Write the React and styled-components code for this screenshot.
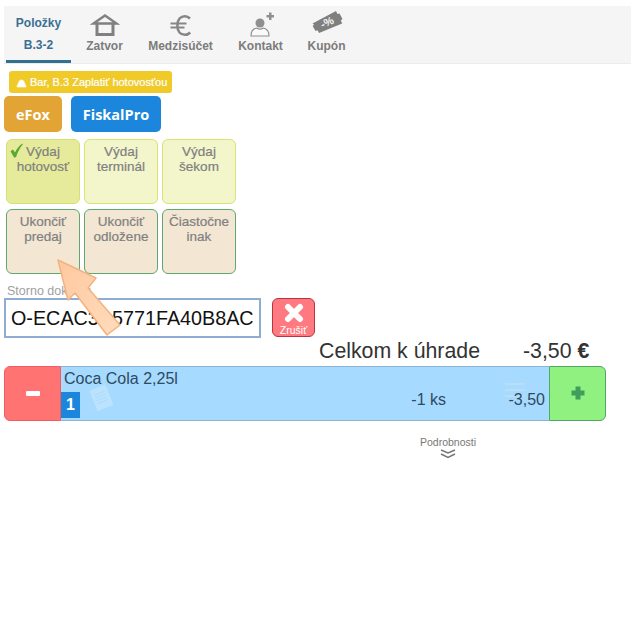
import React from "react";
import styled, { createGlobalStyle } from "styled-components";

const GlobalStyle = createGlobalStyle`
  html, body { margin: 0; padding: 0; background: #fff; }
  body { font-family: "Liberation Sans", Arial, sans-serif; }
`;

const HomeIcon = () => (
  <svg width="28" height="26" viewBox="0 0 28 26" fill="none" stroke="#808080">
    <path d="M2.500 12.500 14 4.500l11.500 8z" strokeWidth="2.400" strokeLinejoin="miter" />
    <path d="M6 12v11.500h16V12" strokeWidth="3" />
  </svg>
);

const EuroIcon = () => (
  <svg width="24" height="26" viewBox="0 0 24 26" fill="none" stroke="#878787">
    <path d="M21 7.500C19.500 6 17.800 5.200 16 5.200c-4.500 0-7.600 3.400-7.600 9.300s3.100 9.300 7.600 9.300c1.900 0 3.700-.8 5.200-2.300" strokeWidth="2.600" />
    <path d="M1.500 12.500h16M1.500 16.500h14" strokeWidth="1.800" />
  </svg>
);

const ContactIcon = () => (
  <svg width="26" height="26" viewBox="0 0 26 26">
    <circle cx="12" cy="12" r="4.500" fill="#8f8f8f" />
    <path d="M3 25c0-5 2.800-7.400 5.600-8 2 1.300 4.800 1.300 6.800 0 2.800.6 5.600 3 5.600 8z" fill="#fafafa" stroke="#8f8f8f" strokeWidth="1.100" />
    <path d="M18.500 4h2.500V1.500h2.500V4H26v2.500h-2.500V9H21V6.500h-2.500z" fill="#8f8f8f" />
  </svg>
);

const CouponIcon = () => (
  <svg width="32" height="26" viewBox="0 0 32 26">
    <path d="M1.500 12.500 25 0l1.500 3 2-.6L31.500 8l-1.700 1.500 1.400 3L8 22l-1.400-2.700-2 .8-3-5.200 1.500-1.200z" fill="#7f7f7f" />
    <text x="16" y="15" fontSize="11" fontWeight="700" fill="#f5f5f5" fontFamily="Liberation Sans" textAnchor="middle" transform="rotate(-24 16 11)">-%</text>
  </svg>
);

const CheckIcon = () => (
  <svg width="13" height="15" viewBox="0 0 13 15">
    <path d="M.5 8.200 3 6.600l2 3C6.500 6.400 8.900 3 12.200.6l.6.8C10 4.600 7.600 9 6 14.300L4 14.500z" fill="#5aa832" />
  </svg>
);

const BellIcon = () => (
  <svg width="11" height="11" viewBox="0 0 11 11">
    <path d="M1 10c0-2 1-2.500 1.500-4C3 4 3.600 3 5.500 3S8 4 8.500 6c.5 1.500 1.500 2 1.500 4z" fill="#fff" stroke="#fff" strokeWidth=".6" strokeLinejoin="round" />
  </svg>
);

const Page = styled.div`
  position: relative;
  width: 631px;
  height: 627px;
  overflow: hidden;
  padding: 6px 0 0 4px;
  box-sizing: border-box;
`;

const TabBar = styled.div`
  display: flex;
  height: 58px;
  background: #f5f5f5;
  border-bottom: 1px solid #ececec;
  box-sizing: border-box;
  padding-left: 2px;
`;

const ActiveTab = styled.div`
  width: 65px;
  height: 57px;
  box-sizing: border-box;
  border-bottom: 3px solid #31708f;
  color: #3b6f94;
  font-size: 12px;
  font-weight: 700;
  text-align: center;
  padding-top: 6px;
  line-height: 22px;
`;

const Tab = styled.div`
  width: ${(p) => p.$width}px;
  display: flex;
  flex-direction: column;
  align-items: center;
  justify-content: flex-start;
  padding-top: 5px;
  color: #7c7c7c;
  font-size: 12px;
  font-weight: 700;
  svg { display: block; height: 26px; margin-bottom: 2px; overflow: visible; }
`;

const Notice = styled.div`
  display: inline-flex;
  align-items: center;
  gap: 3px;
  height: 22px;
  margin: 7px 0 0 5px;
  padding: 0 5px 0 7px;
  background: #f0ca28;
  border-radius: 3px;
  color: #fff;
  font-size: 11px;
  -webkit-text-stroke: 0.2px #fff;
  white-space: nowrap;
`;

const NoticeRow = styled.div`
  display: flex;
`;

const BrandRow = styled.div`
  display: flex;
  gap: 9px;
  margin-top: 3px;
`;

const BrandButton = styled.div`
  display: flex;
  align-items: center;
  justify-content: center;
  width: ${(p) => p.$width}px;
  height: 36px;
  border-radius: 5px;
  background: ${(p) => p.$bg};
  color: #fff;
  font-family: "Open Sans", sans-serif;
  font-size: 14.500px;
  font-weight: 700;
`;

const ActionGrid = styled.div`
  display: grid;
  grid-template-columns: repeat(3, 74px);
  grid-auto-rows: 65px;
  column-gap: 4px;
  row-gap: 5px;
  margin: 7px 0 0 2px;
`;

const ActionButton = styled.div`
  box-sizing: border-box;
  border: 1px solid ${(p) => p.$border};
  border-radius: 6px;
  background: ${(p) => p.$bg};
  color: #808080;
  font-size: 13.500px;
  line-height: 15px;
  text-align: center;
  padding-top: 4px;
  -webkit-text-stroke: 0.2px #808080;
  svg { position: absolute; margin: -1px 0 0 -16px; }
`;

const StornoLabel = styled.div`
  margin: 10px 0 0 3px;
  height: 14px;
  font-size: 12.500px;
  line-height: 14px;
  color: #a0a0a0;
`;

const StornoRow = styled.div`
  display: flex;
  align-items: flex-start;
  gap: 11px;
`;

const StornoInput = styled.div`
  width: 257px;
  height: 40px;
  box-sizing: border-box;
  border: 2px solid #8fadd3;
  padding-left: 5px;
  font-size: 19.750px;
  line-height: 36px;
  color: #111;
  white-space: nowrap;
  overflow: hidden;
`;

const CancelButton = styled.div`
  width: 43px;
  height: 39px;
  box-sizing: border-box;
  border: 1px solid #b8353f;
  border-radius: 6px;
  background: #ff7a80;
  color: #fff;
  font-size: 10.500px;
  text-align: center;
  svg { display: block; margin: 4px auto 1px; }
`;

const TotalRow = styled.div`
  display: flex;
  height: 28px;
  color: #333;
  font-size: 21.300px;
  line-height: 26px;
  padding-left: 315px;
  white-space: nowrap;
`;

const TotalValue = styled.div`
  margin-left: 43px;
  b { font-weight: 700; }
`;

const ItemRow = styled.div`
  display: flex;
  width: 602px;
  height: 55px;
  box-sizing: border-box;
`;

const Minus = styled.div`
  width: 57px;
  box-sizing: border-box;
  display: flex;
  align-items: center;
  justify-content: center;
  background: #ff7373;
  border: 1px solid #f25c63;
  border-radius: 6px 0 0 6px;
  &::after {
    content: "";
    width: 14px;
    height: 5px;
    background: #fff;
    border-radius: 1px;
    margin-top: -1px;
  }
`;

const ItemBody = styled.div`
  position: relative;
  flex: 1;
  background: #a6daff;
  border-top: 1px solid #8cb4d4;
  border-bottom: 1px solid #8cb4d4;
  box-sizing: border-box;
  color: #2d4a62;
`;

const ItemName = styled.div`
  position: relative;
  font-size: 16px;
  line-height: 18px;
  padding: 3px 0 0 3px;
`;

const Quantity = styled.div`
  width: 19px;
  height: 26px;
  margin-top: 4px;
  background: #1b86dc;
  color: #fff;
  font-size: 16px;
  font-weight: 700;
  line-height: 26px;
  text-align: center;
`;

const ItemCount = styled.div`
  position: absolute;
  top: 24px;
  right: 103px;
  font-size: 16px;
`;

const ItemPrice = styled.div`
  position: absolute;
  top: 24px;
  right: 4px;
  font-size: 16px;
`;

const Watermark = styled.svg`
  position: absolute;
  top: 17px;
  left: 26px;
`;

const ListMark = styled.svg`
  position: absolute;
  top: 15px;
  right: 23px;
`;

const Plus = styled.div`
  width: 57px;
  box-sizing: border-box;
  display: flex;
  align-items: center;
  justify-content: center;
  background: #90f080;
  border: 1px solid #4fa868;
  border-radius: 0 6px 6px 0;
  svg { margin-top: -1px; }
`;

const Details = styled.div`
  margin: 15px 0 0 0;
  width: 602px;
  display: flex;
  flex-direction: column;
  align-items: center;
  color: #777;
  font-size: 10.500px;
  line-height: 12px;
  padding-left: 286px;
  box-sizing: border-box;
  svg { display: block; margin-top: 1px; }
`;

const Arrow = styled.svg`
  position: absolute;
  left: 50px;
  top: 252px;
`;

const tabs = [
  { label: "Zatvor", width: 67, icon: <HomeIcon /> },
  { label: "Medzisúčet", width: 85, icon: <EuroIcon /> },
  { label: "Kontakt", width: 75, icon: <ContactIcon /> },
  { label: "Kupón", width: 57, icon: <CouponIcon /> },
];

const actions = [
  { label: ["Výdaj", "hotovosť"], bg: "#e6eb9c", border: "#d5e070", checked: true },
  { label: ["Výdaj", "terminál"], bg: "#f3f6cb", border: "#d9e36f" },
  { label: ["Výdaj", "šekom"], bg: "#f3f6cb", border: "#d9e36f" },
  { label: ["Ukončiť", "predaj"], bg: "#f3e6d3", border: "#5fa870" },
  { label: ["Ukončiť", "odložene"], bg: "#f3e6d3", border: "#5fa870" },
  { label: ["Čiastočne", "inak"], bg: "#f3e6d3", border: "#5fa870" },
];

const App = () => (
  <Page>
    <GlobalStyle />
    <TabBar>
      <ActiveTab>
        Položky
        <br />
        B.3-2
      </ActiveTab>
      {tabs.map((t) => (
        <Tab key={t.label} $width={t.width}>
          {t.icon}
          {t.label}
        </Tab>
      ))}
    </TabBar>
    <NoticeRow>
      <Notice>
        <BellIcon />
        Bar, B.3 Zaplatiť hotovosťou
      </Notice>
    </NoticeRow>
    <BrandRow>
      <BrandButton $width={58} $bg="#e2a535">eFox</BrandButton>
      <BrandButton $width={90} $bg="#1b86dc">FiskalPro</BrandButton>
    </BrandRow>
    <ActionGrid>
      {actions.map((a) => (
        <ActionButton key={a.label.join()} $bg={a.bg} $border={a.border}>
          {a.checked && <CheckIcon />}
          {a.label[0]}
          <br />
          {a.label[1]}
        </ActionButton>
      ))}
    </ActionGrid>
    <StornoLabel>Storno dokladu</StornoLabel>
    <StornoRow>
      <StornoInput>O-ECAC3A5771FA40B8AC</StornoInput>
      <CancelButton>
        <svg width="22" height="20" viewBox="0 0 22 20" fill="none" stroke="#fff" strokeWidth="6" strokeLinecap="round">
          <path d="M5 4l12 12M17 4 5 16" />
        </svg>
        Zrušiť
      </CancelButton>
    </StornoRow>
    <TotalRow>
      Celkom k úhrade
      <TotalValue>
        -3,50 <b>€</b>
      </TotalValue>
    </TotalRow>
    <ItemRow>
      <Minus />
      <ItemBody>
        <Watermark width="28" height="28" viewBox="0 0 28 28">
          <g transform="rotate(-22 14 14)">
            <rect x="6" y="3" width="17" height="22" rx="1" fill="#bce3fd" />
            <path d="M9 9h11M9 12h11M9 15h11M9 18h11" stroke="#a9dbfe" strokeWidth="1" />
          </g>
        </Watermark>
        <ListMark width="22" height="20" viewBox="0 0 22 20" stroke="#b9def5" strokeWidth="2">
          <path d="M1 2h20M1 8h20M1 14h20" />
        </ListMark>
        <ItemName>Coca Cola 2,25l</ItemName>
        <Quantity>1</Quantity>
        <ItemCount>-1 ks</ItemCount>
        <ItemPrice>-3,50</ItemPrice>
      </ItemBody>
      <Plus>
        <svg width="16" height="16" viewBox="0 0 16 16" fill="none" stroke="#3f9e5c" strokeWidth="5" strokeLinejoin="round">
          <path d="M8 1.500v13M1.500 8h13" />
        </svg>
      </Plus>
    </ItemRow>
    <Details>
      Podrobnosti
      <svg width="16" height="10" viewBox="0 0 16 10" fill="none" stroke="#777" strokeWidth="1.500">
        <path d="M1 1l7 3 7-3M1 5l7 3.500L15 5" />
      </svg>
    </Details>
    <Arrow width="80" height="90" viewBox="0 0 80 90">
      <defs>
        <linearGradient id="arrowFill" x1="0" y1="0" x2="1" y2="1">
          <stop offset="0" stopColor="#ffc8a0" />
          <stop offset="1" stopColor="#ffdcbc" />
        </linearGradient>
      </defs>
      <path d="M8 8 46 26 38 36 70 73 57 83 25 41 18 48z" fill="url(#arrowFill)" stroke="#f4b27e" strokeWidth="1.500" strokeLinejoin="round" />
    </Arrow>
  </Page>
);

export default App;
